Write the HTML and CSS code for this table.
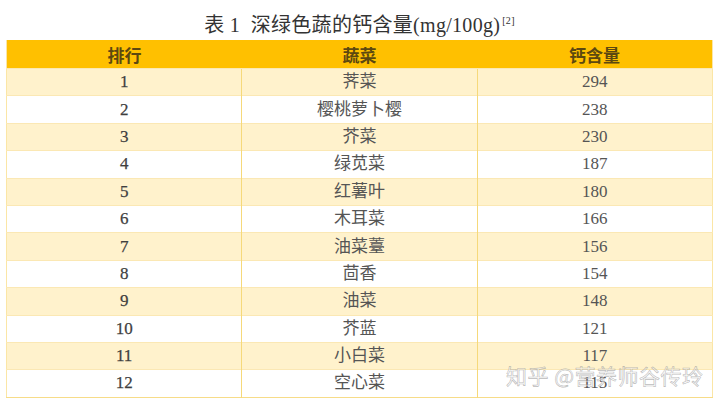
FILE: index.html
```html
<!DOCTYPE html>
<html lang="zh-CN">
<head>
<meta charset="utf-8">
<link rel="stylesheet" href="styles.css">
</head>
<body>
<div class="page">
  <h1 class="title">表 1&nbsp; 深绿色蔬的钙含量(mg/100g)<sup class="ref">[2]</sup></h1>
  <table class="calcium">
    <thead>
      <tr><th>排行</th><th>蔬菜</th><th>钙含量</th></tr>
    </thead>
    <tbody>
      <tr><td class="rank">1</td><td>荠菜</td><td>294</td></tr>
      <tr><td class="rank">2</td><td>樱桃萝卜樱</td><td>238</td></tr>
      <tr><td class="rank">3</td><td>芥菜</td><td>230</td></tr>
      <tr><td class="rank">4</td><td>绿苋菜</td><td>187</td></tr>
      <tr><td class="rank">5</td><td>红薯叶</td><td>180</td></tr>
      <tr><td class="rank">6</td><td>木耳菜</td><td>166</td></tr>
      <tr><td class="rank">7</td><td>油菜薹</td><td>156</td></tr>
      <tr><td class="rank">8</td><td>茴香</td><td>154</td></tr>
      <tr><td class="rank">9</td><td>油菜</td><td>148</td></tr>
      <tr><td class="rank">10</td><td>芥蓝</td><td>121</td></tr>
      <tr><td class="rank">11</td><td>小白菜</td><td>117</td></tr>
      <tr><td class="rank">12</td><td>空心菜</td><td>115</td></tr>
    </tbody>
  </table>
  <div class="watermark">知乎 @营养师谷传玲</div>
</div>
</body>
</html>
```
FILE: styles.css
```css
html, body {
  margin: 0;
  padding: 0;
  background: #ffffff;
}
.page {
  position: relative;
  width: 720px;
  height: 403px;
  overflow: hidden;
  padding: 0 7px 0 6px;
  box-sizing: border-box;
  font-family: "Liberation Serif", "Noto Sans CJK SC", serif;
}
.title {
  margin: 0;
  height: 40px;
  padding-top: 13px;
  box-sizing: border-box;
  text-align: center;
  font-size: 20px;
  line-height: 24px;
  font-weight: normal;
  color: #333333;
  letter-spacing: 0.3px;
}
.ref {
  font-size: 10px;
  vertical-align: 8px;
  line-height: 0;
  margin-left: 2px;
}
.calcium {
  width: 707px;
  border-collapse: collapse;
  table-layout: fixed;
  font-size: 17px;
  color: #555555;
  border-left: 1px solid #fbe6a6;
  border-right: 1px solid #fbe6a6;
  border-bottom: 1px solid #f7dc88;
}
.calcium th {
  background: #ffc000;
  color: #5c4810;
  font-weight: bold;
  height: 28px;
  padding: 0;
  text-align: center;
  border: none;
}
.calcium td {
  height: 26.4px;
  padding: 0;
  text-align: center;
  border-top: 1px solid #fbe8b4;
  border-left: 1px solid #f6d97a;
  line-height: 20px;
}
.calcium td:first-child {
  border-left: none;
}
.calcium tbody tr:nth-child(odd) td {
  background: #fff2cc;
}
.calcium tbody tr:nth-child(even) td {
  background: #ffffff;
}
.calcium td.rank {
  color: #3f3f3f;
  -webkit-text-stroke: 0.25px #3f3f3f;
}
.watermark {
  position: absolute;
  left: 506px;
  top: 361px;
  font-family: "Noto Sans CJK SC", sans-serif;
  font-size: 21px;
  line-height: 28px;
  color: rgba(245, 245, 245, 0.5);
  -webkit-text-stroke: 0.6px rgba(130, 130, 130, 0.55);
  letter-spacing: 0.5px;
  white-space: nowrap;
}
```
